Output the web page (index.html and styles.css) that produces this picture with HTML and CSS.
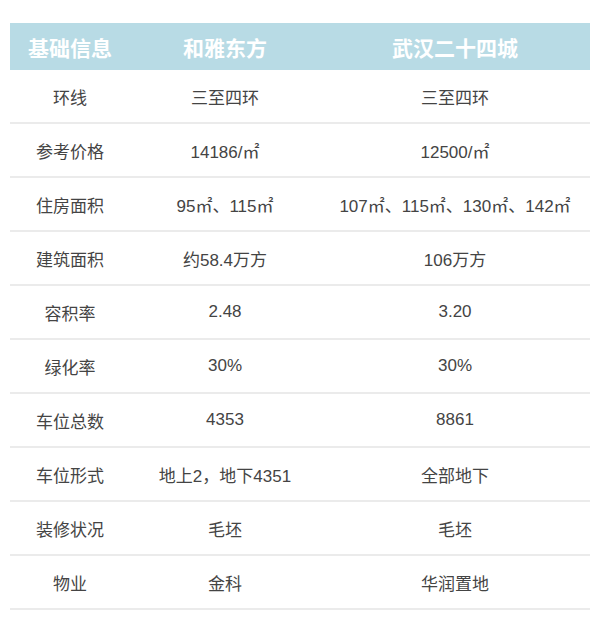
FILE: index.html
```html
<!DOCTYPE html>
<html lang="zh">
<head>
<meta charset="utf-8">
<link rel="stylesheet" href="styles.css">
</head>
<body>
<div class="table">
  <div class="row head">
    <div class="c1">基础信息</div><div class="c2">和雅东方</div><div class="c3">武汉二十四城</div>
  </div>
  <div class="row"><div class="c1">环线</div><div class="c2">三至四环</div><div class="c3">三至四环</div></div>
  <div class="row"><div class="c1">参考价格</div><div class="c2">14186/㎡</div><div class="c3">12500/㎡</div></div>
  <div class="row"><div class="c1">住房面积</div><div class="c2">95㎡、115㎡</div><div class="c3">107㎡、115㎡、130㎡、142㎡</div></div>
  <div class="row"><div class="c1">建筑面积</div><div class="c2">约58.4万方</div><div class="c3">106万方</div></div>
  <div class="row"><div class="c1">容积率</div><div class="c2">2.48</div><div class="c3">3.20</div></div>
  <div class="row"><div class="c1">绿化率</div><div class="c2">30%</div><div class="c3">30%</div></div>
  <div class="row"><div class="c1">车位总数</div><div class="c2">4353</div><div class="c3">8861</div></div>
  <div class="row"><div class="c1">车位形式</div><div class="c2">地上2，地下4351</div><div class="c3">全部地下</div></div>
  <div class="row"><div class="c1">装修状况</div><div class="c2">毛坯</div><div class="c3">毛坯</div></div>
  <div class="row"><div class="c1">物业</div><div class="c2">金科</div><div class="c3">华润置地</div></div>
</div>
</body>
</html>
```
FILE: styles.css
```css
html, body {
  margin: 0;
  padding: 0;
  background: #ffffff;
}
body {
  font-family: "Liberation Sans", "Noto Sans CJK SC", sans-serif;
  color: #444444;
}
.table {
  margin: 23px 10px 0 10px;
  width: 580px;
}
.row {
  display: grid;
  grid-template-columns: 120px 190px 270px;
  height: 52px;
  align-items: center;
  text-align: center;
  font-size: 17px;
  border-bottom: 2px solid #ebebeb;
  white-space: nowrap;
}
.row.head {
  height: 47px;
  border-bottom: none;
  background: #b8dbe5;
  color: #ffffff;
  font-weight: bold;
  font-size: 21px;
}
```
